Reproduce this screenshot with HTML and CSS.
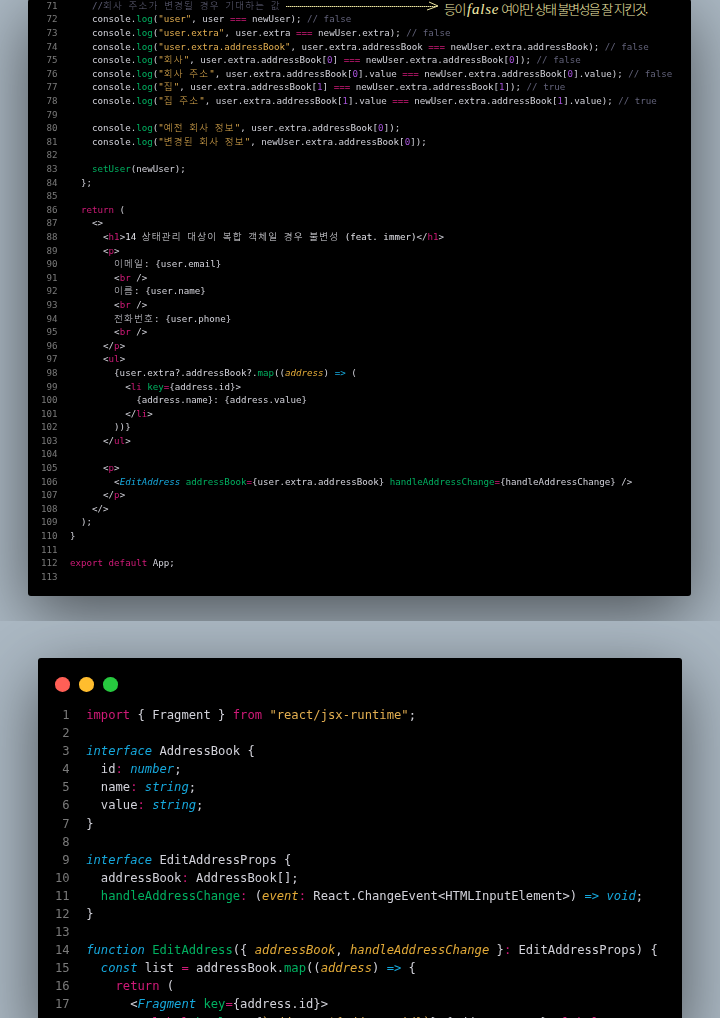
FILE: index.html
```html
<!DOCTYPE html>
<html lang="ko">
<head>
<meta charset="utf-8">
<title>상태관리 불변성</title>
<link rel="stylesheet" href="styles.css">
</head>
<body>
<section class="shot shot-top">
  <div class="card card-small">
    <div class="note">
      <svg class="note-arrow" width="154" height="12" viewBox="0 0 154 12"><path d="M0 7.5H151" stroke="#efe7a0" stroke-width="1" stroke-dasharray="1.5 .5" fill="none"/><path d="M143 3L152 7L141 11" stroke="#efe7a0" stroke-width="1" fill="none"/></svg>
      <span class="note-text">등이 <i class="note-en">false</i> 여야만 상태 불변성을 잘 지킨것.</span>
    </div>
<div class="ln"><span class="no">71</span><code class="cd">    <span class="cm">//<span class="ko">회사</span> <span class="ko">주소가</span> <span class="ko">변경될</span> <span class="ko">경우</span> <span class="ko">기대하는</span> <span class="ko">값</span></span></code></div>
<div class="ln"><span class="no">72</span><code class="cd">    console.<span class="fn">log</span>(<span class="st">"user"</span>, user <span class="kw">===</span> newUser); <span class="cm">// false</span></code></div>
<div class="ln"><span class="no">73</span><code class="cd">    console.<span class="fn">log</span>(<span class="st">"user.extra"</span>, user.extra <span class="kw">===</span> newUser.extra); <span class="cm">// false</span></code></div>
<div class="ln"><span class="no">74</span><code class="cd">    console.<span class="fn">log</span>(<span class="st">"user.extra.addressBook"</span>, user.extra.addressBook <span class="kw">===</span> newUser.extra.addressBook); <span class="cm">// false</span></code></div>
<div class="ln"><span class="no">75</span><code class="cd">    console.<span class="fn">log</span>(<span class="st">"<span class="ko">회사</span>"</span>, user.extra.addressBook[<span class="nm">0</span>] <span class="kw">===</span> newUser.extra.addressBook[<span class="nm">0</span>]); <span class="cm">// false</span></code></div>
<div class="ln"><span class="no">76</span><code class="cd">    console.<span class="fn">log</span>(<span class="st">"<span class="ko">회사</span> <span class="ko">주소</span>"</span>, user.extra.addressBook[<span class="nm">0</span>].value <span class="kw">===</span> newUser.extra.addressBook[<span class="nm">0</span>].value); <span class="cm">// false</span></code></div>
<div class="ln"><span class="no">77</span><code class="cd">    console.<span class="fn">log</span>(<span class="st">"<span class="ko">집</span>"</span>, user.extra.addressBook[<span class="nm">1</span>] <span class="kw">===</span> newUser.extra.addressBook[<span class="nm">1</span>]); <span class="cm">// true</span></code></div>
<div class="ln"><span class="no">78</span><code class="cd">    console.<span class="fn">log</span>(<span class="st">"<span class="ko">집</span> <span class="ko">주소</span>"</span>, user.extra.addressBook[<span class="nm">1</span>].value <span class="kw">===</span> newUser.extra.addressBook[<span class="nm">1</span>].value); <span class="cm">// true</span></code></div>
<div class="ln"><span class="no">79</span><code class="cd"></code></div>
<div class="ln"><span class="no">80</span><code class="cd">    console.<span class="fn">log</span>(<span class="st">"<span class="ko">예전</span> <span class="ko">회사</span> <span class="ko">정보</span>"</span>, user.extra.addressBook[<span class="nm">0</span>]);</code></div>
<div class="ln"><span class="no">81</span><code class="cd">    console.<span class="fn">log</span>(<span class="st">"<span class="ko">변경된</span> <span class="ko">회사</span> <span class="ko">정보</span>"</span>, newUser.extra.addressBook[<span class="nm">0</span>]);</code></div>
<div class="ln"><span class="no">82</span><code class="cd"></code></div>
<div class="ln"><span class="no">83</span><code class="cd">    <span class="fn">setUser</span>(newUser);</code></div>
<div class="ln"><span class="no">84</span><code class="cd">  };</code></div>
<div class="ln"><span class="no">85</span><code class="cd"></code></div>
<div class="ln"><span class="no">86</span><code class="cd">  <span class="kw">return</span> (</code></div>
<div class="ln"><span class="no">87</span><code class="cd">    &lt;&gt;</code></div>
<div class="ln"><span class="no">88</span><code class="cd">      &lt;<span class="kw">h1</span>&gt;<span class="br">14 <span class="ko">상태관리</span> <span class="ko">대상이</span> <span class="ko">복합</span> <span class="ko">객체일</span> <span class="ko">경우</span> <span class="ko">불변성</span> (feat. immer)</span>&lt;/<span class="kw">h1</span>&gt;</code></div>
<div class="ln"><span class="no">89</span><code class="cd">      &lt;<span class="kw">p</span>&gt;</code></div>
<div class="ln"><span class="no">90</span><code class="cd">        <span class="ko">이메일</span>: {user.email}</code></div>
<div class="ln"><span class="no">91</span><code class="cd">        &lt;<span class="kw">br</span> /&gt;</code></div>
<div class="ln"><span class="no">92</span><code class="cd">        <span class="ko">이름</span>: {user.name}</code></div>
<div class="ln"><span class="no">93</span><code class="cd">        &lt;<span class="kw">br</span> /&gt;</code></div>
<div class="ln"><span class="no">94</span><code class="cd">        <span class="ko">전화번호</span>: {user.phone}</code></div>
<div class="ln"><span class="no">95</span><code class="cd">        &lt;<span class="kw">br</span> /&gt;</code></div>
<div class="ln"><span class="no">96</span><code class="cd">      &lt;/<span class="kw">p</span>&gt;</code></div>
<div class="ln"><span class="no">97</span><code class="cd">      &lt;<span class="kw">ul</span>&gt;</code></div>
<div class="ln"><span class="no">98</span><code class="cd">        {user.extra?.addressBook?.<span class="fn">map</span>((<span class="pa">address</span>) <span class="ty-n">=&gt;</span> (</code></div>
<div class="ln"><span class="no">99</span><code class="cd">          &lt;<span class="kw">li</span> <span class="fn">key</span><span class="kw">=</span>{address.id}&gt;</code></div>
<div class="ln"><span class="no">100</span><code class="cd">            {address.name}: {address.value}</code></div>
<div class="ln"><span class="no">101</span><code class="cd">          &lt;/<span class="kw">li</span>&gt;</code></div>
<div class="ln"><span class="no">102</span><code class="cd">        ))}</code></div>
<div class="ln"><span class="no">103</span><code class="cd">      &lt;/<span class="kw">ul</span>&gt;</code></div>
<div class="ln"><span class="no">104</span><code class="cd"></code></div>
<div class="ln"><span class="no">105</span><code class="cd">      &lt;<span class="kw">p</span>&gt;</code></div>
<div class="ln"><span class="no">106</span><code class="cd">        &lt;<span class="ty">EditAddress</span> <span class="fn">addressBook</span><span class="kw">=</span>{user.extra.addressBook} <span class="fn">handleAddressChange</span><span class="kw">=</span>{handleAddressChange} /&gt;</code></div>
<div class="ln"><span class="no">107</span><code class="cd">      &lt;/<span class="kw">p</span>&gt;</code></div>
<div class="ln"><span class="no">108</span><code class="cd">    &lt;/&gt;</code></div>
<div class="ln"><span class="no">109</span><code class="cd">  );</code></div>
<div class="ln"><span class="no">110</span><code class="cd">}</code></div>
<div class="ln"><span class="no">111</span><code class="cd"></code></div>
<div class="ln"><span class="no">112</span><code class="cd"><span class="kw">export</span> <span class="kw">default</span> App;</code></div>
<div class="ln"><span class="no">113</span><code class="cd"></code></div>
  </div>
</section>
<section class="shot shot-bottom">
  <div class="card card-large">
    <div class="dots"><span class="dot dot-red"></span><span class="dot dot-amber"></span><span class="dot dot-green"></span></div>
<div class="ln"><span class="no">1</span><code class="cd"><span class="kw">import</span> { Fragment } <span class="kw">from</span> <span class="st">"react/jsx-runtime"</span>;</code></div>
<div class="ln"><span class="no">2</span><code class="cd"></code></div>
<div class="ln"><span class="no">3</span><code class="cd"><span class="ty">interface</span> AddressBook {</code></div>
<div class="ln"><span class="no">4</span><code class="cd">  id<span class="kw">:</span> <span class="ty">number</span>;</code></div>
<div class="ln"><span class="no">5</span><code class="cd">  name<span class="kw">:</span> <span class="ty">string</span>;</code></div>
<div class="ln"><span class="no">6</span><code class="cd">  value<span class="kw">:</span> <span class="ty">string</span>;</code></div>
<div class="ln"><span class="no">7</span><code class="cd">}</code></div>
<div class="ln"><span class="no">8</span><code class="cd"></code></div>
<div class="ln"><span class="no">9</span><code class="cd"><span class="ty">interface</span> EditAddressProps {</code></div>
<div class="ln"><span class="no">10</span><code class="cd">  addressBook<span class="kw">:</span> AddressBook[];</code></div>
<div class="ln"><span class="no">11</span><code class="cd">  <span class="fn">handleAddressChange</span><span class="kw">:</span> (<span class="pa">event</span><span class="kw">:</span> React.ChangeEvent&lt;HTMLInputElement&gt;) <span class="ty-n">=&gt;</span> <span class="ty">void</span>;</code></div>
<div class="ln"><span class="no">12</span><code class="cd">}</code></div>
<div class="ln"><span class="no">13</span><code class="cd"></code></div>
<div class="ln"><span class="no">14</span><code class="cd"><span class="ty">function</span> <span class="fn">EditAddress</span>({ <span class="pa">addressBook</span>, <span class="pa">handleAddressChange</span> }<span class="kw">:</span> EditAddressProps) {</code></div>
<div class="ln"><span class="no">15</span><code class="cd">  <span class="ty">const</span> list <span class="kw">=</span> addressBook.<span class="fn">map</span>((<span class="pa">address</span>) <span class="ty-n">=&gt;</span> {</code></div>
<div class="ln"><span class="no">16</span><code class="cd">    <span class="kw">return</span> (</code></div>
<div class="ln"><span class="no">17</span><code class="cd">      &lt;<span class="ty">Fragment</span> <span class="fn">key</span><span class="kw">=</span>{address.id}&gt;</code></div>
<div class="ln"><span class="no">18</span><code class="cd">        &lt;<span class="kw">label</span> <span class="fn">htmlFor</span><span class="kw">=</span>{<span class="st">`address-${address.id}`</span>}&gt;{address.name}&lt;/<span class="kw">label</span>&gt;</code></div>
  </div>
</section>
</body>
</html>
```
FILE: styles.css
```css
* { box-sizing: border-box; }
html, body { margin: 0; padding: 0; }
body { width: 720px; height: 1018px; overflow: hidden; background: #abb8c3; }

.shot { background: #abb8c3; overflow: hidden; display: flex; }
.shot-top { height: 621px; flex-direction: column; justify-content: flex-end; align-items: flex-start; padding: 0 0 25px 28px; }
.shot-bottom { height: 397px; flex-direction: column; padding: 37px 0 0 38px; }

.card {
  position: relative;
  flex: none;
  background: #000;
  border-radius: 3px;
  box-shadow: 0 20px 68px rgba(0, 0, 0, .55);
  font-family: "DejaVu Sans Mono", monospace;
  color: #d2d2da;
}
.card-small { width: 663px; padding: 0 0 12.6px 13px; font-size: 9.16px; --lh: 13.6px; --no: 16.5px; --gap: 12.5px; }
.card-large { width: 644px; padding: 19px 0 0 17px; font-size: 12.18px; --lh: 18.1px; --no: 14.7px; --gap: 16.5px; }

.ln { display: flex; height: var(--lh); line-height: var(--lh); white-space: pre; filter: blur(.3px); }
.no { flex: none; width: var(--no); margin-right: var(--gap); text-align: right; color: #7a7a7a; }
.cd { font: inherit; }

.kw { color: #d01a78; }
.fn { color: #00b060; }
.st { color: #e2ae50; }
.nm { color: #a552d8; }
.cm { color: #62627a; }
.ty { color: #16a8dc; font-style: italic; }
.ty-n { color: #16a8dc; }
.pa { color: #e2aa38; font-style: italic; }
.br { color: #e0e0e6; }
.ko { font-family: "Noto Sans CJK KR", sans-serif; font-size: 9.6px; letter-spacing: 1.17px; font-weight: 300; line-height: 0; }

.dots { display: flex; gap: 9.4px; margin-bottom: 14.4px; }
.dot { width: 14.6px; height: 14.6px; border-radius: 50%; }
.dot-red { background: #ff5f56; }
.dot-amber { background: #ffbd2e; }
.dot-green { background: #27c93f; }

.note { position: absolute; top: 0; left: 258px; z-index: 1; display: flex; align-items: flex-start; height: 20px; }
.note-arrow { flex: none; margin-right: 4px; }
.note-text { font-family: "Noto Sans CJK KR", sans-serif; font-weight: 300; font-size: 13px; line-height: 19px; color: #f4ecaa; white-space: pre; letter-spacing: -1.55px; }
.note-en { font-family: "Liberation Serif", serif; font-size: 15px; letter-spacing: .8px; }
```
